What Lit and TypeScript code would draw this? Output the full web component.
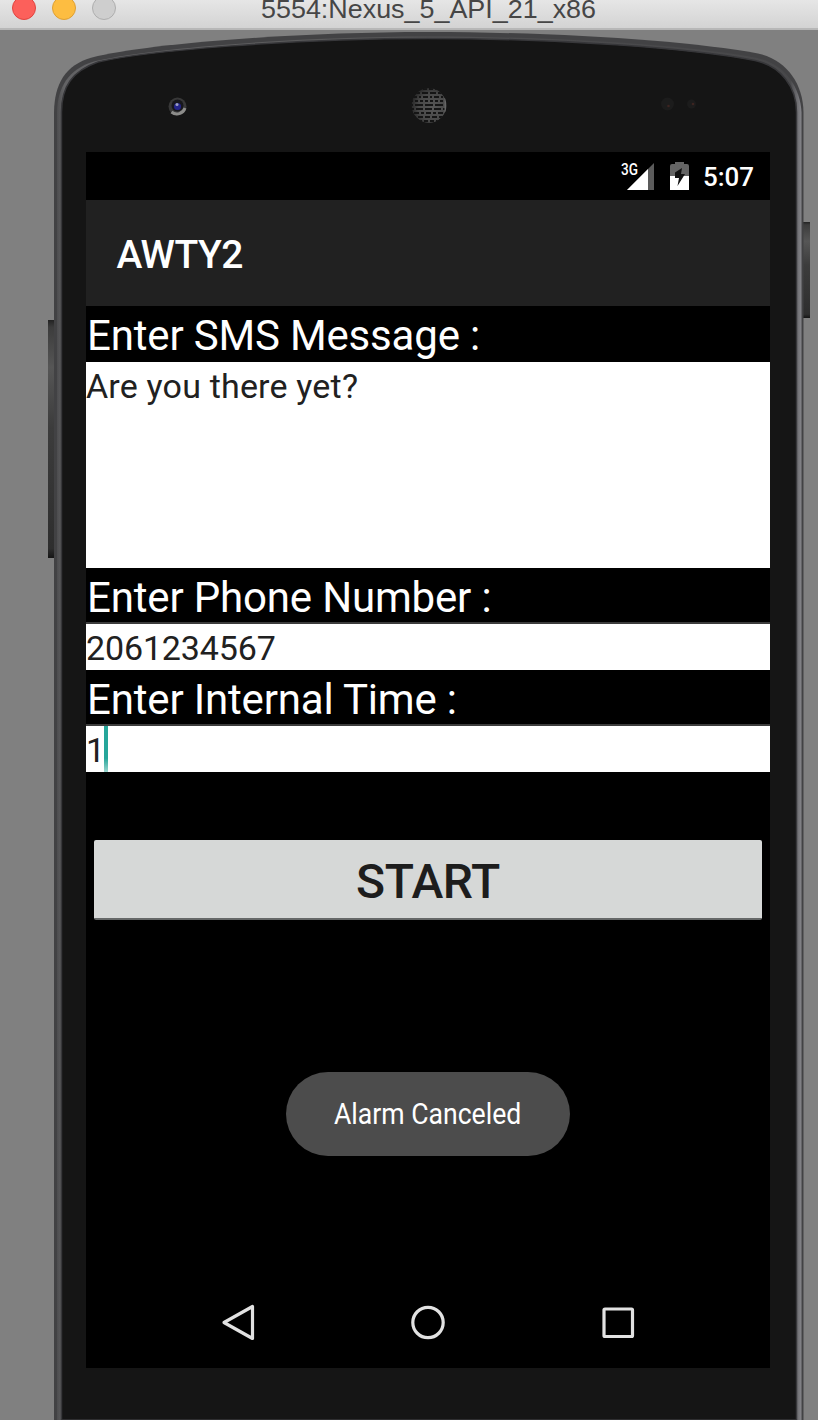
import { LitElement, html, css, svg } from "lit";
import { customElement } from "lit/decorators.js";

const OUTER =
  "M54 1420V112C54.500 84 65 65 92 57.500C142 44.500 290 32 428 32C560 32 690 41 758 53.500C786 59.500 803 83 803.500 112V1420Z";
const EDGE =
  "M57 1420V112C57.500 88 68 69 94 61.500C143 49.500 290 36.500 428 36.500C560 36.500 690 45.500 757 58C784 64 800 86 801.500 112V1420Z";
const INNER =
  "M61.500 1420V112C61.500 87 72 71 98 62C144 51 290 38.500 428 38.500C560 38.500 690 48 755 60.500C781 66 796.500 87 796.500 112V1420Z";

@customElement("phone-shell")
export class PhoneShell extends LitElement {
  static styles = css`
    :host { display: block; width: 818px; height: 1390px; }
    svg { display: block; }
  `;

  private grille() {
    const dashes = ["4 2", "6 2", "2 2 5 2", "3 2", "8 2", "7 2", "3 2 5 2", "5 2", "4 2"];
    return dashes.map((d, i) => svg`<path d="M411 ${89 + i * 4}H448" stroke="#151515" stroke-width="2"
      stroke-dasharray=${d} stroke-dashoffset=${(i * 5) % 7}></path>`);
  }

  render() {
    return html`<svg width="818" height="1390" viewBox="0 30 818 1390">
      <defs>
        <linearGradient id="key" x1="0" y1="0" x2="0" y2="1">
          <stop offset="0" stop-color="#222"></stop>
          <stop offset=".03" stop-color="#3c3c3c"></stop>
          <stop offset=".2" stop-color="#565656"></stop>
          <stop offset=".45" stop-color="#3c3c3c"></stop>
          <stop offset=".96" stop-color="#2e2e2e"></stop>
          <stop offset="1" stop-color="#151515"></stop>
        </linearGradient>
        <linearGradient id="rim" x1="0" y1="0" x2="1" y2="0">
          <stop offset="0" stop-color="#4d4d4f"></stop>
          <stop offset=".01" stop-color="#636365"></stop>
          <stop offset=".3" stop-color="#5b5b5c"></stop>
          <stop offset=".7" stop-color="#4a4a4c"></stop>
          <stop offset=".985" stop-color="#48484a"></stop>
          <stop offset="1" stop-color="#85858a"></stop>
        </linearGradient>
        <radialGradient id="mesh" cx=".6" cy=".55" r=".62">
          <stop offset="0" stop-color="#565656"></stop>
          <stop offset=".65" stop-color="#484848"></stop>
          <stop offset="1" stop-color="#262626"></stop>
        </radialGradient>
        <clipPath id="grille"><circle cx="429" cy="105.500" r="17.500"></circle></clipPath>
      </defs>
      <rect x="48" y="320" width="7" height="238" fill="url(#key)"></rect>
      <rect x="803" y="222" width="7" height="96" fill="url(#key)"></rect>
      <path d=${OUTER} fill="#424244"></path>
      <path d=${EDGE} fill="url(#rim)"></path>
      <path d=${INNER} fill="#151515" stroke="#37373a" stroke-width="1.500"></path>
      <circle cx="177.500" cy="106.500" r="9" fill="#383838"></circle>
      <path d="M171.500 112a8.500 8.500 0 0 0 13.500-4" fill="none" stroke="#8c8c8a" stroke-width="3"></path>
      <circle cx="177.500" cy="105.500" r="6" fill="#17171c"></circle>
      <circle cx="177.500" cy="106.500" r="3.500" fill="#24248a"></circle>
      <circle cx="177" cy="104.500" r="1.500" fill="#9ba0c4"></circle>
      <g clip-path="url(#grille)">
        <circle cx="429" cy="105.500" r="17.500" fill="url(#mesh)"></circle>
        ${this.grille()}
        <path d="M445.500 98v14" stroke="#666" stroke-width="2"></path>
      </g>
      <circle cx="667.500" cy="104" r="6.500" fill="#1c1c1c"></circle>
      <circle cx="668.500" cy="106" r="1.300" fill="#3c2420"></circle>
      <circle cx="691.500" cy="104" r="4.500" fill="#1c1c1c"></circle>
      <circle cx="693" cy="104" r="1.300" fill="#3c2420"></circle>
    </svg>`;
  }
}

@customElement("phone-screen")
export class PhoneScreen extends LitElement {
  static styles = css`
    :host {
      display: flex; flex-direction: column; width: 684px; height: 1216px;
      background: #000; color: #fff; font-family: Roboto, sans-serif;
    }
    svg { display: block; }
    .status { display: flex; height: 48px; flex: none; }
    .signal { width: 684px; height: 48px; }
    .bar { display: flex; height: 106px; flex: none; background: #212121; padding-left: 30.5px; }
    .title { font-size: 39px; font-weight: 500; line-height: 110px; letter-spacing: -.65px; white-space: nowrap; }
    .label { flex: none; height: 56px; line-height: 60px; padding-left: 1px; font-size: 42px; letter-spacing: -.17px; white-space: nowrap; }
    .low { height: 54px; line-height: 59px; }
    .field { flex: none; display: flex; background: #fff; color: #212121; font-size: 34px; line-height: 48px; white-space: nowrap; }
    .message { height: 206px; letter-spacing: .18px; }
    .line { height: 46px; border-top: 2px solid #3c3c3c; letter-spacing: -.15px; }
    .caret { width: 4px; margin-left: -1px; background: linear-gradient(#26a69a 70%, #9bd5cf); }
    .start {
      flex: none; margin: 68px 8px 0; height: 80px; border: 0; border-bottom: 2px solid #666868;
      border-radius: 2px; background: #d6d8d7; color: #1d1d1d; padding: 0;
      font: 500 48px/84px Roboto, sans-serif; letter-spacing: -.4px; text-align: center;
    }
    .toast {
      align-self: center; flex: none; margin-top: 152px; width: 284px; height: 84px;
      border-radius: 42px; background: #4c4c4c; line-height: 84px; font-size: 30px; text-align: center;
    }
    .narrow { display: inline-block; transform: scaleX(.887); white-space: nowrap; }
    .nav { display: flex; flex: none; margin-top: auto; height: 96px; }
    .clock { font: 500 26px Roboto, sans-serif; }
    .net { font: 500 16px Roboto, sans-serif; }
  `;

  render() {
    return html`
      <div class="status">
        <svg class="signal" viewBox="86 152 684 48">
          <text class="net" x="621" y="174.500" fill="#fff" textLength="17" lengthAdjust="spacingAndGlyphs">3G</text>
          <path d="M627 190L654 163V190Z" fill="#5b5b5b"></path>
          <path d="M627 190L648 169V190Z" fill="#fff"></path>
          <path d="M670 166q0-2 2-2h3v-2h9v2h3q2 0 2 2v10h-19Z" fill="#646464"></path>
          <path d="M670 176h19v14h-19Z" fill="#fff"></path>
          <path d="M682 168L675 172.500V178H679L677.500 186L685 174H681Z" fill="#111"></path>
          <text class="clock" x="703" y="186" fill="#fff" textLength="51" lengthAdjust="spacingAndGlyphs">5:07</text>
        </svg>
      </div>
      <div class="bar"><span class="title">AWTY2</span></div>
      <div class="label">Enter SMS Message :</div>
      <div class="field message">Are you there yet?</div>
      <div class="label low">Enter Phone Number :</div>
      <div class="field line">2061234567</div>
      <div class="label low">Enter Internal Time :</div>
      <div class="field line">1<span class="caret"></span></div>
      <button class="start">START</button>
      <div class="toast"><span class="narrow">Alarm Canceled</span></div>
      <div class="nav">
        <svg width="684" height="96" viewBox="86 1272 684 96" fill="none" stroke="#e2e2e2" stroke-width="3.200">
          <path d="M224 1322.500L252.500 1306.500V1338.500Z" stroke-linejoin="round"></path>
          <circle cx="428" cy="1322.500" r="15.200"></circle>
          <rect x="604" y="1309" width="28.500" height="27.500" rx="1"></rect>
        </svg>
      </div>`;
  }
}

@customElement("app-root")
export class AppRoot extends LitElement {
  static styles = css`
    :host { display: flex; flex-direction: column; width: 818px; height: 1420px; overflow: hidden; background: #808080; }
    .titlebar {
      flex: none; display: flex; box-sizing: border-box; height: 30px;
      background: linear-gradient(#e6e6e6, #d3d3d3); border-bottom: 2px solid #b7b7b7;
    }
    .stage { display: grid; flex: none; height: 1390px; }
    .shell { grid-area: 1 / 1; }
    .screen { grid-area: 1 / 1; margin: 122px 0 0 86px; }
    .name { font: 26px "Liberation Sans", Arial, sans-serif; }
  `;

  render() {
    return html`
      <div class="titlebar">
        <svg width="818" height="28" viewBox="0 0 818 28">
          <circle cx="24" cy="8" r="11.500" fill="#fc605b" stroke="#e0443f"></circle>
          <circle cx="64" cy="8" r="11.500" fill="#fdbd41" stroke="#de9f34"></circle>
          <circle cx="104" cy="8" r="11.500" fill="#cecece" stroke="#aeaeae"></circle>
          <text class="name" x="261" y="18" fill="#464646" textLength="335" lengthAdjust="spacingAndGlyphs">5554:Nexus_5_API_21_x86</text>
        </svg>
      </div>
      <div class="stage">
        <phone-shell class="shell"></phone-shell>
        <phone-screen class="screen"></phone-screen>
      </div>`;
  }
}
